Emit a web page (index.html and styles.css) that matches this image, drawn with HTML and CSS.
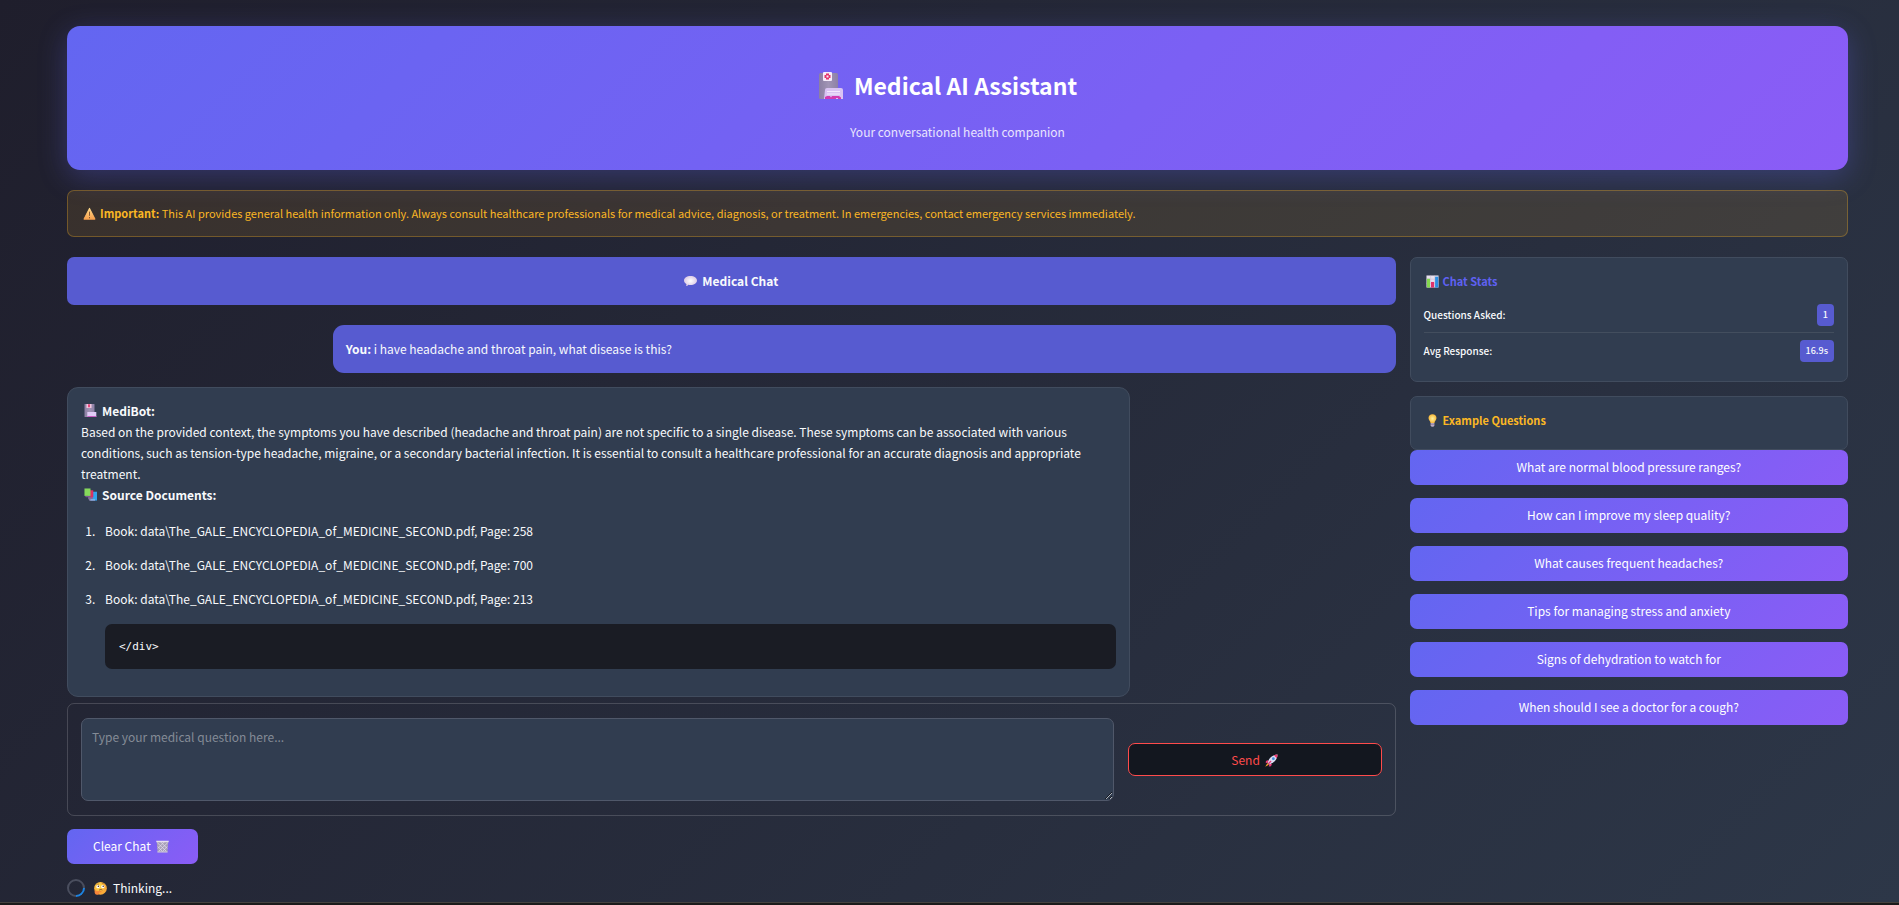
FILE: index.html
```html
<!DOCTYPE html>
<html lang="en">
<head>
<meta charset="utf-8">
<title>Medical AI Assistant</title>
<link rel="stylesheet" href="styles.css">
</head>
<body>
<svg class="defs" aria-hidden="true">
  <defs>
    <linearGradient id="tower" x1="0" x2="1"><stop offset="0" stop-color="#8b7fa3"/><stop offset=".5" stop-color="#a094b4"/><stop offset="1" stop-color="#8d80a6"/></linearGradient>
    <linearGradient id="warn" x1="0" y1="0" x2="0" y2="1"><stop offset="0" stop-color="#ffd98a"/><stop offset="1" stop-color="#f6a04e"/></linearGradient>
    <radialGradient id="cloud"><stop offset="0" stop-color="#ffffff"/><stop offset="1" stop-color="#dccbe6"/></radialGradient>
    <radialGradient id="face" cx=".4" cy=".35"><stop offset="0" stop-color="#ffe14f"/><stop offset="1" stop-color="#f9aa38"/></radialGradient>
    <radialGradient id="glow"><stop offset="0" stop-color="#fff3a0"/><stop offset="1" stop-color="#f8b83a"/></radialGradient>
    <symbol id="hospital" viewBox="0 0 24 27">
      <rect x="0" y="1" width="19" height="26" rx="1.5" fill="url(#tower)"/>
      <rect x="4" y="0" width="9" height="9" rx="1" fill="#f6ecfb"/>
      <path d="M7 1.500h3v1.500h1.500v3H10v1.500H7V6H5.500V3H7z" fill="#e5346c"/>
      <rect x="7.500" y="3.500" width="2" height="2" fill="#f6ecfb"/>
      <path d="M6 18a2 2 0 0 1 2-2h14a2 2 0 0 1 2 2v9H5z" fill="#d9c3f3"/>
      <path d="M8 19.500h13M8 22h13" stroke="#f3e9fd" stroke-width="1"/>
      <path d="M6 27v-2l2-1h3l1 1.500 1-1.500h7l2 1.500v1.500h-3v-1h-2v1z" fill="#d33bb0"/>
    </symbol>
    <symbol id="hospital-small" viewBox="0 0 13 13">
      <rect x=".5" y="0" width="10" height="13" rx=".6" fill="url(#tower)"/>
      <path d="M2.500 0h5v4h-5z" fill="#f3c6dd"/>
      <path d="M4 .3h2v3H4z" fill="#e5487c"/>
      <path d="M3.300 8h9V13h-9z" fill="#e0ccf7"/>
      <path d="M3.300 12h9v1h-9z" fill="#c95fc4"/>
    </symbol>
  </defs>
</svg>
<div class="app">
  <header class="hero">
    <h1><svg class="icon icon-lg" viewBox="0 0 24 27" aria-hidden="true"><use href="#hospital"/></svg>Medical AI Assistant</h1>
    <p>Your conversational health companion</p>
  </header>

  <div class="notice" role="note">
    <svg class="icon" viewBox="0 0 14 14" aria-hidden="true"><path d="M7 1.500 12.800 13H1.200z" fill="url(#warn)" stroke="url(#warn)" stroke-width="1.200" stroke-linejoin="round"/><path d="M7 5v4.500M7 10.800v1.400" stroke="#7a5030" stroke-width="1"/></svg>
    <p><strong>Important:</strong> This AI provides general health information only. Always consult healthcare professionals for medical advice, diagnosis, or treatment. In emergencies, contact emergency services immediately.</p>
  </div>

  <div class="columns">
    <main class="chat">
      <h2 class="chat-title"><svg class="icon" viewBox="0 0 14 14" aria-hidden="true"><path d="M7 1c4 0 7 2.100 7 4.900s-3 4.900-7 4.900c-.8 0-1.600-.1-2.300-.3-.6.9-1.700 1.400-2.500 1.300.5-.6.600-1.300.300-2.100C1 8.800 0 7.500 0 5.900 0 3.100 3 1 7 1z" fill="url(#cloud)"/></svg>Medical Chat</h2>

      <div class="bubble bubble-user"><strong>You:</strong> i have headache and throat pain, what disease is this?</div>

      <article class="bubble bubble-bot">
        <div class="lead"><svg class="icon" viewBox="0 0 13 13" aria-hidden="true"><use href="#hospital-small"/></svg><strong>MediBot:</strong></div>
        <p>Based on the provided context, the symptoms you have described (headache and throat pain) are not specific to a single disease. These symptoms can be associated with various conditions, such as tension-type headache, migraine, or a secondary bacterial infection. It is essential to consult a healthcare professional for an accurate diagnosis and appropriate treatment.</p>
        <div class="lead"><svg class="icon" viewBox="0 0 14 14" aria-hidden="true"><path d="M7 4h7v9.500H7z" fill="#2fa4ee"/><path d="M4.500 3h5v9h-5z" fill="#8a6a9c"/><path d="M6 2.500h4V10H6z" fill="#dc3165"/><path d="M.5.500H7v8H.5z" fill="#86d95c"/><path d="M1 8.500h6V10H2z" fill="#7a5a94"/><path d="M5 12.300h7v1.200H6z" fill="#c6b6e4"/></svg><strong>Source Documents:</strong></div>
        <ol>
          <li>Book: data\The_GALE_ENCYCLOPEDIA_of_MEDICINE_SECOND.pdf, Page: 258</li>
          <li>Book: data\The_GALE_ENCYCLOPEDIA_of_MEDICINE_SECOND.pdf, Page: 700</li>
          <li>Book: data\The_GALE_ENCYCLOPEDIA_of_MEDICINE_SECOND.pdf, Page: 213
            <pre><code>&lt;/div&gt;</code></pre>
          </li>
        </ol>
      </article>

      <form class="composer">
        <textarea aria-label="Your question" placeholder="Type your medical question here..."></textarea>
        <button class="send" type="button">Send <svg class="icon" viewBox="0 0 14 14" aria-hidden="true"><path d="M3.500 6.500 1 7.500.8 10l3-1zM7.500 10.500l-1 2.700-2.500.3 1-3z" fill="#e83a78"/><path d="M13.500.5C10 .600 7 2 4.500 5.500L2.800 9.300l1.900 1.900 3.800-1.700C12 7 13.400 4 13.500.5z" fill="#dcdcf2"/><path d="M13.500.5c-1.500 0-2.800.3-4 .900l3.100 3.100c.600-1.200.9-2.500.9-4z" fill="#e8386f"/><circle cx="9" cy="5" r="1.500" fill="#3f8fe0"/><path d="m6.500 7.500-3 3.200" stroke="#e83a78" stroke-width="1.500"/><path d="M2.600 9.800.3 13.700l3.900-2.200z" fill="#f99b2a"/></svg></button>
      </form>

      <button class="primary clear" type="button">Clear Chat <svg class="icon" viewBox="0 0 14 14" aria-hidden="true"><path d="M.8 1.500h12.400L12.300 13H1.700z" fill="#a79fb8"/><path d="m1.500 3 9.500 9M5 2l7 7M2 7l5 5.500M12.500 3 3 12M9 2 2 9M12 7l-5 5.500" stroke="#e2dcec" stroke-width=".8"/><path d="M.3.800h13.400v1.600H.3z" fill="#e6e0ee"/><path d="M1.500 12.300h11v1.200h-11z" fill="#cfc8dc"/></svg></button>

      <div class="status" role="status">
        <span class="spinner"></span>
        <svg class="icon" viewBox="0 0 14 14" aria-hidden="true"><circle cx="7" cy="6.800" r="6.800" fill="url(#face)"/><circle cx="4.300" cy="5" r="1.800" fill="#fff"/><circle cx="9.500" cy="5" r="1.800" fill="#fff"/><circle cx="4.700" cy="4.700" r=".8" fill="#4a2b2b"/><circle cx="9.900" cy="4.700" r=".8" fill="#4a2b2b"/><path d="M2.800 2.700c.8-.6 1.700-.7 2.600-.3M8.500 1.800c1-.5 2-.2 2.700.5" stroke="#9a5a20" stroke-width=".6" fill="none"/><path d="M5.500 8.700c1.200-.7 2.500-.7 3.500-.1" stroke="#6b3324" stroke-width=".8" fill="none"/><path d="M.8 9.200c.8-.7 1.400-.2 1.700.8l5-.4c1 0 1 1.300 0 1.400l-2 .3c.3 1.600-.7 2.500-2.200 2.500C1.200 13.800.2 12 .8 9.200z" fill="#f7853a"/></svg>
        <span>Thinking...</span>
      </div>
    </main>

    <aside class="side">
      <section class="card stats">
        <h3><svg class="icon" viewBox="0 0 14 14" aria-hidden="true"><path d="M.5.500h13v13H.5z" fill="#e8e0ee"/><path d="M.5 4.500h13M.5 9h13M5 .5v13M9.300.5v13" stroke="#c3b8d0" stroke-width=".5"/><path d="M1 4h3.300v9.500H1z" fill="#84d84f"/><path d="M5.400 7.500h3.300v6H5.400z" fill="#e0326a"/><path d="M9.800 1.800h3.400v11.700H9.800z" fill="#2b8fe4"/></svg>Chat Stats</h3>
        <dl>
          <div><dt>Questions Asked:</dt><dd>1</dd></div>
          <div><dt>Avg Response:</dt><dd>16.9s</dd></div>
        </dl>
      </section>
      <section class="card examples">
        <h3><svg class="icon" viewBox="0 0 14 14" aria-hidden="true"><path d="M7 .3c2.500 0 4.300 1.800 4.300 4.100 0 2.300-1.900 3-2.200 5.300H4.900C4.600 7.400 2.700 6.700 2.700 4.400 2.700 2.100 4.500.3 7 .3z" fill="url(#glow)"/><path d="M5 9.700h4v2.600L8 13.700H6l-1-1.400z" fill="#b9a9c4"/><path d="M5 11h4" stroke="#75648a" stroke-width=".7"/></svg>Example Questions</h3>
      </section>
      <div class="prompts">
        <button class="primary" type="button">What are normal blood pressure ranges?</button>
        <button class="primary" type="button">How can I improve my sleep quality?</button>
        <button class="primary" type="button">What causes frequent headaches?</button>
        <button class="primary" type="button">Tips for managing stress and anxiety</button>
        <button class="primary" type="button">Signs of dehydration to watch for</button>
        <button class="primary" type="button">When should I see a doctor for a cough?</button>
      </div>
    </aside>
  </div>
</div>
<footer class="edge"></footer>
</body>
</html>
```
FILE: styles.css
```css
* {
  box-sizing: border-box;
  margin: 0;
  padding: 0;
}

body {
  display: flex;
  flex-direction: column;
  min-height: 100vh;
  font-family: "Noto Sans CJK SC", "Noto Sans", sans-serif;
  font-size: 12px;
  line-height: 22px;
  color: #f8fafc;
  background: linear-gradient(135deg, #1f1e2c 0%, #2d3748 100%);
}

button,
textarea {
  font: inherit;
  color: inherit;
}

.defs {
  position: absolute;
  width: 0;
  height: 0;
}

.app {
  flex: 1;
  padding: 26px 51px 2px 67px;
}

.icon {
  flex: none;
  width: 13px;
  height: 13px;
}

.hero {
  padding: 39px 0 28px;
  text-align: center;
  border-radius: 13px;
  background: linear-gradient(135deg, #6366f1 0%, #8b5cf6 100%);
  box-shadow: 0 7px 29px rgba(99, 102, 241, 0.3);
}

.hero h1 {
  display: flex;
  justify-content: center;
  align-items: center;
  gap: 11px;
  padding-right: 19px;
  font-size: 23px;
  line-height: 40px;
  font-weight: 600;
  color: #fff;
}

.hero .icon-lg {
  width: 24px;
  height: 27px;
}

.hero p {
  margin-top: 17px;
  line-height: 20px;
  color: #e9e4fe;
}

.notice {
  display: flex;
  align-items: center;
  gap: 4px;
  margin-top: 20px;
  padding: 12px 15px;
  font-size: 11px;
  line-height: 21px;
  color: #fbb724;
  border: 1px solid rgba(251, 183, 36, 0.3);
  border-radius: 7px;
  background: rgba(251, 183, 36, 0.11);
}

.columns {
  display: grid;
  grid-template-columns: minmax(0, 100fr) minmax(0, 33fr);
  gap: 14px;
  margin-top: 20px;
}

.chat-title {
  display: flex;
  justify-content: center;
  align-items: center;
  gap: 5px;
  padding: 13px;
  font-size: 12px;
  font-weight: 600;
  border-radius: 7px;
  background: #575bd0;
}

.bubble {
  width: 80%;
  padding: 13px;
  border-radius: 11px;
}

.bubble-user {
  margin: 20px 0 14px auto;
  background: #575bd0;
}

.bubble-bot {
  padding-top: 12px;
  line-height: 21px;
  border: 1px solid #414c5e;
  background: #313d50;
}

.lead {
  display: flex;
  align-items: center;
  gap: 5px;
  padding-left: 3px;
}

.bubble-bot ol {
  margin-top: 15px;
  padding-left: 17px;
}

.bubble-bot li {
  padding-left: 7px;
}

.bubble-bot li + li {
  margin-top: 13px;
}

.bubble-bot pre {
  margin: 15px 0 14px;
  padding: 12px 14px;
  font-family: "DejaVu Sans Mono", monospace;
  font-size: 11px;
  line-height: 21px;
  border-radius: 7px;
  background: #1a1c24;
}

.bubble-bot pre code {
  font: inherit;
}

.composer {
  display: grid;
  grid-template-columns: minmax(0, 61fr) minmax(0, 15fr);
  align-items: center;
  gap: 14px;
  margin-top: 6px;
  padding: 14px 13px;
  border: 1px solid rgba(250, 250, 250, 0.17);
  border-radius: 7px;
}

.composer textarea {
  display: block;
  width: 100%;
  height: 83px;
  padding: 7px 10px;
  resize: vertical;
  border: 1px solid #50586a;
  border-radius: 7px;
  background: #313d50;
}

.composer textarea::placeholder {
  color: #848b96;
}

.send,
.primary {
  display: flex;
  justify-content: center;
  align-items: center;
  gap: 5px;
  border-radius: 7px;
}

.send {
  padding: 5px 5px 4px;
  color: #ff4b4b;
  border: 1px solid #ff4b4b;
  background: #13171f;
}

.primary {
  padding: 6px 26px 7px;
  color: #fff;
  border: 0;
  background: linear-gradient(135deg, #6366f1 0%, #8b5cf6 100%);
}

.clear {
  margin-top: 13px;
  padding-right: 29px;
}

.status {
  display: flex;
  align-items: center;
  gap: 6px;
  margin-top: 13px;
}

.spinner {
  width: 18px;
  height: 18px;
  margin-right: 3px;
  border: 2px solid #4a4e5e;
  border-right-color: #1c83e1;
  border-radius: 50%;
  transform: rotate(45deg);
}

.card {
  padding: 13px;
  border: 1px solid #414c5e;
  border-radius: 7px;
  background: #313d50;
}

.card h3 {
  display: flex;
  align-items: center;
  gap: 4px;
  padding-left: 2px;
  font-size: 11px;
  line-height: 20px;
  font-weight: 600;
}

.stats h3 {
  color: #5f61f2;
}

.stats dl {
  margin-top: 7px;
}

.stats dl div {
  display: flex;
  justify-content: space-between;
  align-items: center;
  padding: 6px 0;
  font-size: 10px;
}

.stats dl div + div {
  padding-top: 7px;
  border-top: 1px solid #434e5e;
}

.stats dt {
  font-weight: 500;
}

.stats dd {
  padding: 0 6px;
  font-size: 9px;
  font-weight: 500;
  border-radius: 4px;
  background: #575bd0;
}

.examples {
  margin-top: 14px;
  padding-bottom: 19px;
}

.examples h3 {
  color: #fbb724;
}

.prompts {
  display: flex;
  flex-direction: column;
  gap: 13px;
}

.edge {
  height: 3px;
  border-top: 1px solid #45423f;
  background: #1b1b1b;
}
```
